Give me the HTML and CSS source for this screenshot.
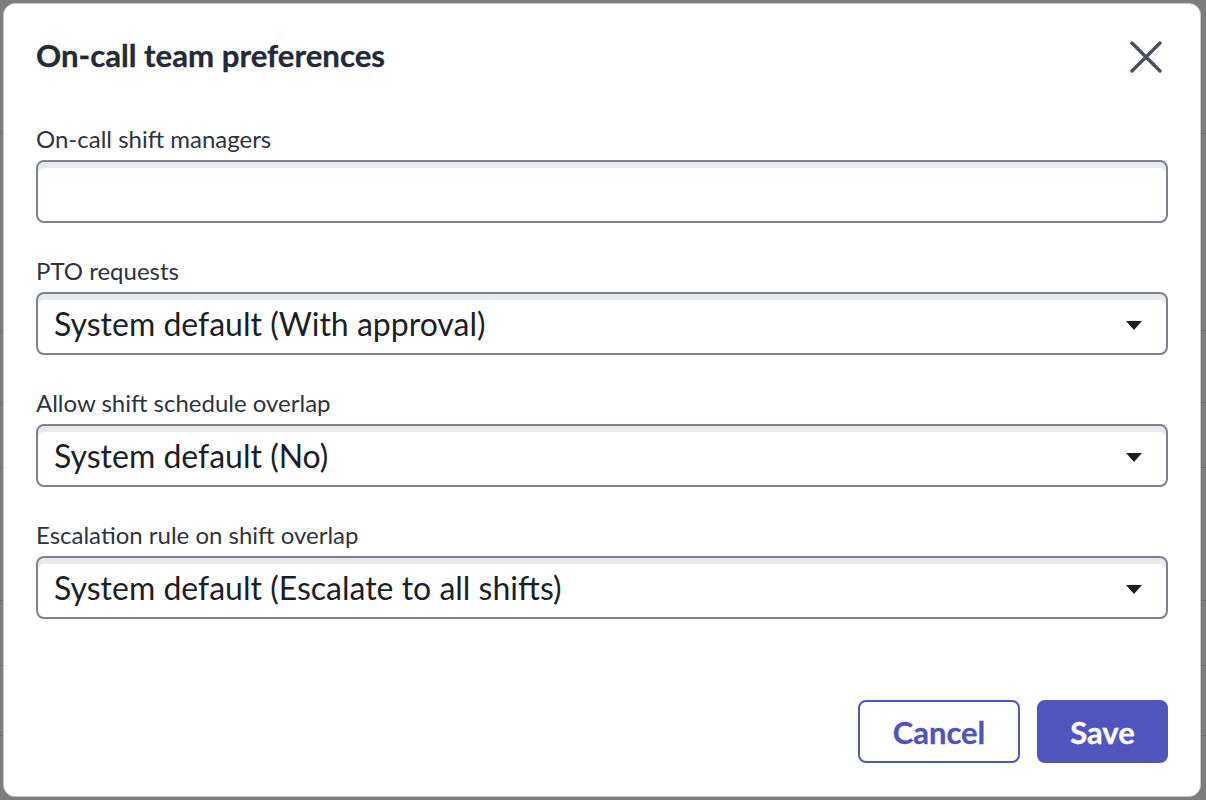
FILE: index.html
```html
<!DOCTYPE html>
<html lang="en">
<head>
<meta charset="utf-8">
<title>On-call team preferences</title>
<link rel="stylesheet" href="styles.css">
</head>
<body>
<div class="backdrop">
  <div class="dialog" role="dialog" aria-labelledby="dlg-title">
    <div class="dialog-header">
      <h1 id="dlg-title" class="dialog-title">On-call team preferences</h1>
      <button class="close-btn" aria-label="Close">
        <svg viewBox="0 0 32 32" width="32" height="32" aria-hidden="true">
          <path d="M2 2 L30 30 M30 2 L2 30" stroke="#4a4f5b" stroke-width="3.4" stroke-linecap="round" fill="none"/>
        </svg>
      </button>
    </div>
    <div class="dialog-body">
      <div class="field">
        <label class="field-label">On-call shift managers</label>
        <div class="control"></div>
      </div>
      <div class="field">
        <label class="field-label">PTO requests</label>
        <div class="control select">
          <span class="select-value">System default (With approval)</span>
          <span class="caret"></span>
        </div>
      </div>
      <div class="field">
        <label class="field-label">Allow shift schedule overlap</label>
        <div class="control select">
          <span class="select-value">System default (No)</span>
          <span class="caret"></span>
        </div>
      </div>
      <div class="field">
        <label class="field-label">Escalation rule on shift overlap</label>
        <div class="control select">
          <span class="select-value">System default (Escalate to all shifts)</span>
          <span class="caret"></span>
        </div>
      </div>
    </div>
    <div class="dialog-footer">
      <button class="btn btn-secondary">Cancel</button>
      <button class="btn btn-primary">Save</button>
    </div>
  </div>
</div>
</body>
</html>
```

FILE: styles.css
```css
* { box-sizing: border-box; }

html, body {
  margin: 0;
  padding: 0;
  height: 100%;
}

body {
  font-family: Lato, "Open Sans", "Liberation Sans", sans-serif;
  background: #7d7d7d;
}

.backdrop {
  height: 800px;
  padding: 3px 5px 3px 3px;
  background:
    linear-gradient(#6e6e6e, #6e6e6e) 0 133px / 100% 1px no-repeat,
    linear-gradient(#6e6e6e, #6e6e6e) 0 330px / 100% 1px no-repeat,
    linear-gradient(#6e6e6e, #6e6e6e) 0 402px / 100% 1px no-repeat,
    linear-gradient(#6e6e6e, #6e6e6e) 0 467px / 100% 1px no-repeat,
    linear-gradient(#6e6e6e, #6e6e6e) 0 600px / 100% 1px no-repeat,
    linear-gradient(#6e6e6e, #6e6e6e) 0 665px / 100% 1px no-repeat,
    linear-gradient(#6e6e6e, #6e6e6e) 0 735px / 100% 1px no-repeat,
    #7d7d7d;
}

.dialog {
  height: 794px;
  background: #ffffff;
  border: 1px solid #c9c9c9;
  border-radius: 12px;
  padding: 32px 32px 33px 32px;
  display: flex;
  flex-direction: column;
}

.dialog-header {
  display: flex;
  align-items: center;
  justify-content: space-between;
}

.dialog-title {
  margin: 0;
  font-size: 31.2px;
  line-height: 38px;
  font-weight: 700;
  color: #252a37;
  -webkit-text-stroke: 0.3px #252a37;
}

.close-btn {
  width: 32px;
  height: 32px;
  padding: 0;
  margin-right: 6px;
  margin-top: 4px;
  border: 0;
  background: transparent;
  display: flex;
}

.dialog-body {
  display: flex;
  flex-direction: column;
  gap: 34px;
  margin-top: 51px;
}

.field {
  display: flex;
  flex-direction: column;
  gap: 7px;
}

.field-label {
  font-size: 24px;
  line-height: 28px;
  color: #2e3340;
}

.control {
  height: 63px;
  border: 2px solid #7c8290;
  border-radius: 8px;
  background: #ffffff;
  box-shadow: inset 0 6px 0 #e8e9ea;
}

.select {
  display: flex;
  align-items: center;
  justify-content: space-between;
  padding: 0 24px 0 16px;
}

.select-value {
  font-size: 32px;
  line-height: 38px;
  color: #1b1f27;
  margin-top: 1px;
}

.caret {
  width: 0;
  height: 0;
  border-left: 8px solid transparent;
  border-right: 8px solid transparent;
  border-top: 9px solid #1a1d24;
  margin-top: 4px;
}

.dialog-footer {
  margin-top: auto;
  display: flex;
  justify-content: flex-end;
  gap: 17px;
}

.btn {
  height: 63px;
  border-radius: 8px;
  font-family: Lato, "Open Sans", "Liberation Sans", sans-serif;
  font-size: 31px;
  font-weight: 700;
  padding: 0;
  cursor: pointer;
}

.btn-secondary {
  width: 162px;
  background: #ffffff;
  color: #4f53bb;
  border: 2px solid #5156be;
  -webkit-text-stroke: 0.3px #4f53bb;
}

.btn-primary {
  width: 131px;
  background: #5156be;
  color: #ffffff;
  border: 2px solid #5156be;
  -webkit-text-stroke: 0.3px #ffffff;
}
```
